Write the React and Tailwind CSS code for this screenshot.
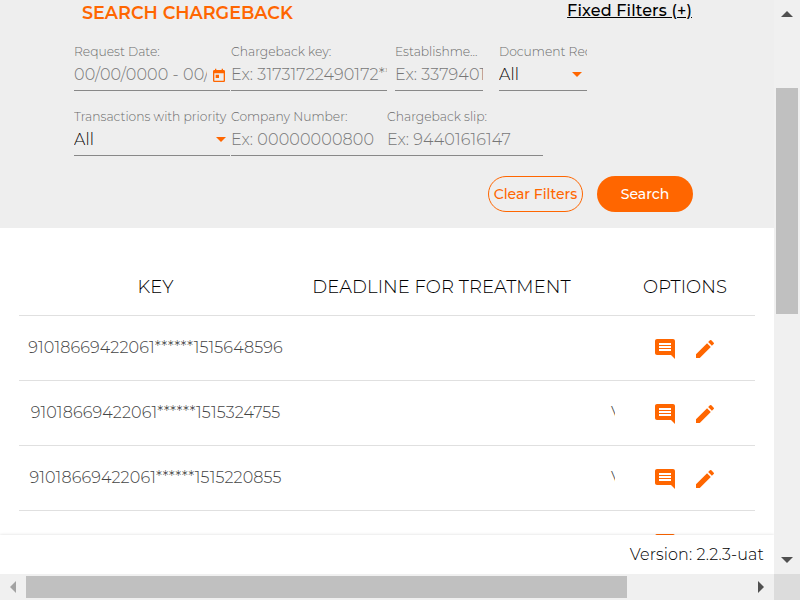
import { MdComment, MdEdit, MdToday } from "react-icons/md";

const fields1 = [
  { label: "Request Date:", value: "00/00/0000 - 00/00/0000", box: "w-[156px] mr-px", icon: "date" },
  { label: "Chargeback key:", value: "Ex: 31731722490172******", box: "w-[156px] mr-2" },
  { label: "Establishme...", value: "Ex: 3379401616", box: "w-[88px] mr-4" },
  { label: "Document Received:", value: "All", box: "w-[88px]", icon: "select", arrow: "mr-[5px]" },
];

const fields2 = [
  { label: "Transactions with priority", value: "All", box: "w-[156px] mr-px", icon: "select", arrow: "mr-1" },
  { label: "Company Number:", value: "Ex: 00000000800", box: "w-[156px]" },
  { label: "Chargeback slip:", value: "Ex: 94401616147", box: "w-[156px]" },
];

const rows = [
  { key: "91018669422061******1515648596", status: "" },
  { key: "91018669422061******1515324755", status: "V" },
  { key: "91018669422061******1515220855", status: "V" },
  { key: "91018669422061******1515220312", status: "" },
];

function Field({ label, value, box, icon, arrow }) {
  return (
    <div className={`${box} h-[49px] shrink-0 border-b border-[#888] whitespace-nowrap`}>
      <div className="h-5 overflow-hidden text-[12.3px] leading-5 text-[#6c6c6c]">{label}</div>
      <div className="flex h-[26px] items-center">
        <div
          className={`min-w-0 flex-1 overflow-hidden text-base leading-6 tracking-[0.12px] ${
            icon === "select" ? "text-black" : "text-[#777]"
          }`}
        >
          {value}
        </div>
        {icon === "date" && <MdToday className="mt-0.5 mr-[3px] ml-1 size-4 shrink-0 text-[#ff6600]" />}
        {icon === "select" && (
          <svg className={`${arrow} mb-0.5 h-[5px] w-2.5 shrink-0`} viewBox="0 0 10 5">
            <path d="M0 0h10L5 5z" fill="#ff6600" />
          </svg>
        )}
      </div>
    </div>
  );
}

function Arrow({ d, fill, className }) {
  return (
    <svg className={className} viewBox="0 0 12 12">
      <path d={d} fill={fill} />
    </svg>
  );
}

export default function App() {
  return (
    <div className="flex h-[600px] w-[800px] flex-col overflow-hidden bg-white font-['Montserrat','Inter',sans-serif] font-light">
      <div className="flex h-[574px]">
        <div className="flex w-[774px] flex-col">
          <main className="h-[535px] overflow-hidden">
            <section className="h-[228px] bg-[#eee] pl-[74px]">
              <div className="flex h-[42px] w-[618px] justify-between pl-2 whitespace-nowrap">
                <h1 className="text-[17.6px] leading-[26px] font-semibold text-[#ff6600]">SEARCH CHARGEBACK</h1>
                <a className="text-base leading-[22px] font-medium tracking-[0.15px] text-black underline">Fixed Filters (+)</a>
              </div>
              <div className="flex">
                {fields1.map((f) => (
                  <Field key={f.label} {...f} />
                ))}
              </div>
              <div className="mt-4 flex">
                {fields2.map((f) => (
                  <Field key={f.label} {...f} />
                ))}
              </div>
              <div className="mt-5 ml-[414px] flex gap-3.5 text-sm font-medium whitespace-nowrap">
                <button className="h-9 w-[95px] rounded-full border border-[#ff6600] text-[#ff6600]">
                  <span className="-mx-2">Clear Filters</span>
                </button>
                <button className="h-9 w-24 rounded-full bg-[#ff6600] text-white">Search</button>
              </div>
            </section>

            <section className="mr-[19px] ml-[19px] pt-[30px]">
              <div className="flex h-[58px] border-b border-[#e0e0e0] text-center text-lg leading-[58px] tracking-[0.07px] whitespace-nowrap text-black">
                <div className="w-[273px]">KEY</div>
                <div className="w-[299px]">DEADLINE FOR TREATMENT</div>
                <div className="w-6" />
                <div className="w-[140px]">OPTIONS</div>
              </div>
              {rows.map((r) => (
                <div key={r.key} className="flex h-[65px] items-center border-b border-[#e0e0e0] text-base text-[#444]">
                  <div className="w-[273px] text-center tracking-[0.135px]">{r.key}</div>
                  <div className="w-[299px]" />
                  <div className="w-6 overflow-hidden pl-5">{r.status}</div>
                  <div className="flex w-[140px] justify-center gap-4 pt-0.5 text-[#ff6600]">
                    <MdComment className="size-6" />
                    <MdEdit className="size-6" />
                  </div>
                </div>
              ))}
            </section>
          </main>
          <footer className="z-10 h-[39px] bg-white pr-2.5 text-right text-base leading-10 tracking-[0.11px] text-black shadow-[0_0_3px_rgba(0,0,0,0.15)]">
            Version: 2.2.3-uat
          </footer>
        </div>
        <div className="z-20 flex w-[26px] flex-col items-center bg-[#f0f0f0]">
          <div className="flex h-[88px] items-start pt-[11px]">
            <Arrow className="size-3" d="M0 6L6 0L12 6z" fill="#505050" />
          </div>
          <div className="h-[226px] w-[22px] bg-[#c0c0c0]" />
          <div className="mt-auto flex h-[17px]">
            <Arrow className="size-3" d="M0 0H12L6 6z" fill="#505050" />
          </div>
        </div>
      </div>
      <div className="z-20 flex h-[26px] items-center bg-[#f0f0f0]">
        <div className="flex w-[26px] pl-2.5">
          <Arrow className="size-3" d="M0 6L6 0V12z" fill="#a3a3a3" />
        </div>
        <div className="h-[22px] w-[601px] bg-[#c0c0c0]" />
        <div className="ml-auto flex w-4">
          <Arrow className="size-3" d="M0 0L6 6L0 12z" fill="#505050" />
        </div>
        <div className="h-[26px] w-[26px] bg-[#dcdcdc]" />
      </div>
    </div>
  );
}
